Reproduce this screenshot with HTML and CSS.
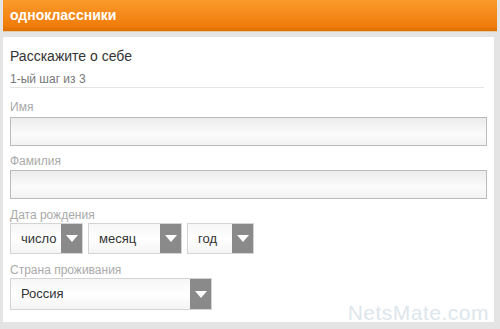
FILE: index.html
```html
<html>
<head>
  <meta charset="utf-8">
  <link rel="stylesheet" href="styles.css">
</head>
<body>
  <div class="header">одноклассники</div>

  <div class="panel">
    <div class="title">Расскажите о себе</div>
    <div class="step">1-ый шаг из 3</div>

    <div class="label first">Имя</div>
    <div class="input"></div>

    <div class="label">Фамилия</div>
    <div class="input"></div>

    <div class="label date">Дата рождения</div>
    <div class="row">
      <div class="select day"><span>число</span><b class="arrow"></b></div>
      <div class="select month"><span>месяц</span><b class="arrow"></b></div>
      <div class="select year"><span>год</span><b class="arrow"></b></div>
    </div>

    <div class="label">Страна проживания</div>
    <div class="select country"><span>Россия</span><b class="arrow"></b></div>

    <div class="mark">NetsMate.com</div>
  </div>
</body>
</html>
```

FILE: styles.css
```css
body {
	margin: 0;
	background: #e4e4e4;
	font-family: "Liberation Sans", Arial, sans-serif;
	width: 500px;
	height: 329px;
	overflow: hidden;
}

.header {
	margin: 0 3px 0 3px;
	height: 31px;
	padding-left: 7px;
	line-height: 31px;
	color: #fff;
	font-size: 14px;
	font-weight: bold;
	background: linear-gradient(#fb9a2c, #f07c0a 85%, #d96e06);
	border-bottom: 1px solid #e6c9a5;
}

.panel {
	position: relative;
	margin: 5px 6px 0 3px;
	height: 277px;
	background: #fff;
	padding: 8px 7px 0 7px;
}

.title {
	font-size: 14px;
	color: #333;
	height: 22px;
	line-height: 22px;
}

.step {
	font-size: 12px;
	color: #777;
	height: 18px;
	line-height: 20px;
	margin-top: 2px;
	border-bottom: 1px solid #e4e4e4;
	margin-right: 3px;
}

.label {
	font-size: 12px;
	color: #aaa;
	margin-top: 8px;
	height: 14px;
	line-height: 14px;
}

.label.first {
	margin-top: 12px;
}

.label.date {
	margin-top: 9px;
}

.input {
	margin-top: 2px;
	height: 27px;
	border: 1px solid #bbb;
	background: linear-gradient(#ececec, #fbfbfb 60%, #f2f2f2);
}

.label.first + .input {
	margin-top: 3px;
}

.row {
	display: flex;
	gap: 5px;
	margin-top: 1px;
}

.select {
	display: flex;
	height: 29px;
	border: 1px solid #d4d4d4;
	background: linear-gradient(#f6f6f6, #fff 50%, #f4f4f4);
	font-size: 13px;
	color: #333;
}

.select span {
	flex: 1;
	line-height: 29px;
	padding-left: 10px;
}

.arrow {
	width: 21px;
	background: #8a8a8a;
	position: relative;
}

.arrow:after {
	content: "";
	position: absolute;
	left: 5px;
	top: 11px;
	border-left: 6px solid transparent;
	border-right: 6px solid transparent;
	border-top: 7px solid #fff;
}

.day { width: 71px; }
.month { width: 92px; }
.year { width: 65px; }

.row + .label {
	margin-top: 9px;
}

.country {
	width: 200px;
	height: 30px;
	margin-top: 1px;
}

.country span {
	line-height: 30px;
}

.country .arrow:after {
	top: 12px;
}

.mark {
	position: absolute;
	right: 5px;
	bottom: -3px;
	font-size: 21px;
	color: #dde6ec;
	letter-spacing: 0.5px;
}
```
